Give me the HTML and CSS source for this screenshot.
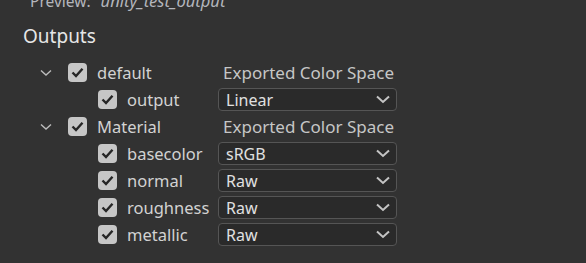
FILE: index.html
```html
<!DOCTYPE html>
<html lang="en">
<head>
    <meta charset="UTF-8">
    <title>Outputs</title>
    <link rel="stylesheet" href="styles.css">
</head>
<body>
    <div class="panel">
        <div class="preview">Preview: <span class="preview-name">unity_test_output</span></div>
        <h2 class="title">Outputs</h2>

        <div class="tree">
            <div class="row parent">
                <span class="chevron"><svg width="12" height="8" viewBox="0 0 12 8"><path d="M1 1.5 L6 6 L11 1.5" fill="none" stroke="#bdbdbd" stroke-width="1.4"/></svg></span>
                <span class="check"><svg width="13" height="11" viewBox="0 0 13 11"><path d="M1.5 5.5 L5 9 L11.5 1.8" fill="none" stroke="#262626" stroke-width="2.4"/></svg></span>
                <span class="name">default</span>
                <span class="col-head">Exported Color Space</span>
            </div>
            <div class="row child">
                <span class="check"><svg width="13" height="11" viewBox="0 0 13 11"><path d="M1.5 5.5 L5 9 L11.5 1.8" fill="none" stroke="#262626" stroke-width="2.4"/></svg></span>
                <span class="name">output</span>
                <div class="select"><span>Linear</span><svg width="14" height="9" viewBox="0 0 14 9"><path d="M1 1.5 L7 7 L13 1.5" fill="none" stroke="#c4c4c4" stroke-width="2"/></svg></div>
            </div>

            <div class="row parent">
                <span class="chevron"><svg width="12" height="8" viewBox="0 0 12 8"><path d="M1 1.5 L6 6 L11 1.5" fill="none" stroke="#bdbdbd" stroke-width="1.4"/></svg></span>
                <span class="check"><svg width="13" height="11" viewBox="0 0 13 11"><path d="M1.5 5.5 L5 9 L11.5 1.8" fill="none" stroke="#262626" stroke-width="2.4"/></svg></span>
                <span class="name">Material</span>
                <span class="col-head">Exported Color Space</span>
            </div>
            <div class="row child">
                <span class="check"><svg width="13" height="11" viewBox="0 0 13 11"><path d="M1.5 5.5 L5 9 L11.5 1.8" fill="none" stroke="#262626" stroke-width="2.4"/></svg></span>
                <span class="name">basecolor</span>
                <div class="select"><span>sRGB</span><svg width="14" height="9" viewBox="0 0 14 9"><path d="M1 1.5 L7 7 L13 1.5" fill="none" stroke="#c4c4c4" stroke-width="2"/></svg></div>
            </div>
            <div class="row child">
                <span class="check"><svg width="13" height="11" viewBox="0 0 13 11"><path d="M1.5 5.5 L5 9 L11.5 1.8" fill="none" stroke="#262626" stroke-width="2.4"/></svg></span>
                <span class="name">normal</span>
                <div class="select"><span>Raw</span><svg width="14" height="9" viewBox="0 0 14 9"><path d="M1 1.5 L7 7 L13 1.5" fill="none" stroke="#c4c4c4" stroke-width="2"/></svg></div>
            </div>
            <div class="row child">
                <span class="check"><svg width="13" height="11" viewBox="0 0 13 11"><path d="M1.5 5.5 L5 9 L11.5 1.8" fill="none" stroke="#262626" stroke-width="2.4"/></svg></span>
                <span class="name">roughness</span>
                <div class="select"><span>Raw</span><svg width="14" height="9" viewBox="0 0 14 9"><path d="M1 1.5 L7 7 L13 1.5" fill="none" stroke="#c4c4c4" stroke-width="2"/></svg></div>
            </div>
            <div class="row child">
                <span class="check"><svg width="13" height="11" viewBox="0 0 13 11"><path d="M1.5 5.5 L5 9 L11.5 1.8" fill="none" stroke="#262626" stroke-width="2.4"/></svg></span>
                <span class="name">metallic</span>
                <div class="select"><span>Raw</span><svg width="14" height="9" viewBox="0 0 14 9"><path d="M1 1.5 L7 7 L13 1.5" fill="none" stroke="#c4c4c4" stroke-width="2"/></svg></div>
            </div>
        </div>
    </div>
</body>
</html>
```

FILE: styles.css
```css
/* Outputs panel */
html, body {
    margin: 0;
    background: #323232;
}
body {
    font-family: "Noto Sans", sans-serif;
    color: #d2d2d2;
    overflow: hidden;
}
.panel {
    width: 586px;
    height: 263px;
    margin-top: -9px;
}
.preview {
    height: 20px;
    padding-left: 30px;
    font-size: 15.5px;
    line-height: 20px;
    color: #b4b6bc;
}
.preview-name {
    font-style: italic;
    font-size: 16.5px;
    margin-left: 6px;
}
.title {
    margin: 13px 0 11px 23px;
    font-size: 19px;
    font-weight: normal;
    line-height: 24px;
    color: #e6e6e6;
}
.row {
    display: flex;
    align-items: center;
    height: 27px;
    font-size: 16.5px;
}
.parent {
    padding-left: 40px;
}
.child {
    padding-left: 98px;
}
.chevron {
    display: flex;
    width: 28px;
}
.check {
    display: flex;
    align-items: center;
    justify-content: center;
    width: 19px;
    height: 19px;
    border-radius: 4px;
    background: #c6c6c6;
}
.name {
    margin-left: 10px;
}
.parent .name {
    width: 116px;
}
.child .name {
    width: 91px;
}
.col-head {
    margin-left: 10px;
    font-size: 17px;
    color: #c6c6c6;
}
.select {
    display: flex;
    align-items: center;
    justify-content: space-between;
    box-sizing: border-box;
    width: 179px;
    height: 23px;
    padding: 0 6px 0 7px;
    border: 1px solid #555;
    border-radius: 4px;
    background: #2a2a2a;
    color: #e0e0e0;
    font-size: 16px;
}
```
